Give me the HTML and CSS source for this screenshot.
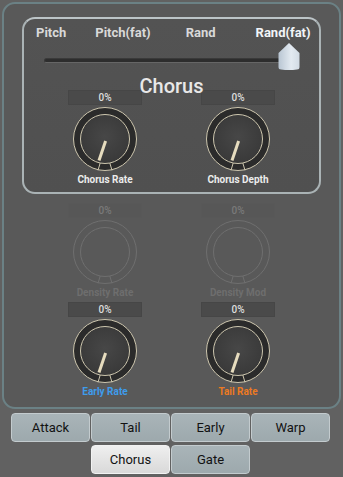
FILE: index.html
```html
<!DOCTYPE html>
<html>
<head>
<meta charset="utf-8">
<link rel="stylesheet" href="styles.css">
</head>
<body>
<div class="panel">
  <div class="chorus-box">
    <div class="modes">
      <span class="mode m1">Pitch</span>
      <span class="mode m2">Pitch(fat)</span>
      <span class="mode m3">Rand</span>
      <span class="mode m4 active">Rand(fat)</span>
    </div>
    <div class="slider">
      <div class="track"></div>
      <svg class="thumb" width="22" height="27" viewBox="0 0 22 27">
        <defs>
          <linearGradient id="tg" x1="0" y1="0" x2="1" y2="0">
            <stop offset="0" stop-color="#b9c6d3"/>
            <stop offset="0.6" stop-color="#e3eaf1"/>
            <stop offset="1" stop-color="#d2dbe4"/>
          </linearGradient>
          <radialGradient id="kg" cx="0.5" cy="0.45" r="0.6">
            <stop offset="0" stop-color="#474747"/>
            <stop offset="1" stop-color="#383838"/>
          </radialGradient>
        </defs>
        <path d="M11 0 L21.5 10 L21.5 24 Q21.5 26.5 19 26.5 Q11 27.5 3 26.5 Q0.5 26.5 0.5 24 L0.5 10 Z" fill="url(#tg)"/>
      </svg>
    </div>
    <div class="title">Chorus</div>
    <div class="knob-row">
      <div class="knob-unit">
        <div class="value">0%</div>
        <svg class="knob" width="66" height="66" viewBox="0 0 66 66">
          <circle cx="33" cy="33" r="31.5" fill="#2b2b2b" stroke="#cdc6ae" stroke-width="1"/>
          <circle cx="33" cy="33" r="24.5" fill="url(#kg)" stroke="#cdc6ae" stroke-width="1"/>
          <path d="M28.2 57 L26 64.3 M37.8 57 L40 64.3" stroke="#cdc6ae" stroke-width="1" fill="none"/>
          <path d="M33.6 35 L27 54.5" stroke="#e6dcbe" stroke-width="3"/>
        </svg>
        <div class="label">Chorus Rate</div>
      </div>
      <div class="knob-unit">
        <div class="value">0%</div>
        <svg class="knob" width="66" height="66" viewBox="0 0 66 66">
          <circle cx="33" cy="33" r="31.5" fill="#2b2b2b" stroke="#cdc6ae" stroke-width="1"/>
          <circle cx="33" cy="33" r="24.5" fill="url(#kg)" stroke="#cdc6ae" stroke-width="1"/>
          <path d="M28.2 57 L26 64.3 M37.8 57 L40 64.3" stroke="#cdc6ae" stroke-width="1" fill="none"/>
          <path d="M33.6 35 L27 54.5" stroke="#e6dcbe" stroke-width="3"/>
        </svg>
        <div class="label">Chorus Depth</div>
      </div>
    </div>
  </div>

  <div class="knob-row disabled row2">
    <div class="knob-unit">
      <div class="value">0%</div>
      <svg class="knob" width="66" height="66" viewBox="0 0 66 66">
        <circle cx="33" cy="33" r="31.5" fill="none" stroke="#6f6f6f" stroke-width="1"/>
        <circle cx="33" cy="33" r="24.5" fill="none" stroke="#6f6f6f" stroke-width="1"/>
        <path d="M28.2 57 L26 64.3 M37.8 57 L40 64.3" stroke="#6f6f6f" stroke-width="1" fill="none"/>
      </svg>
      <div class="label">Density Rate</div>
    </div>
    <div class="knob-unit">
      <div class="value">0%</div>
      <svg class="knob" width="66" height="66" viewBox="0 0 66 66">
        <circle cx="33" cy="33" r="31.5" fill="none" stroke="#6f6f6f" stroke-width="1"/>
        <circle cx="33" cy="33" r="24.5" fill="none" stroke="#6f6f6f" stroke-width="1"/>
        <path d="M28.2 57 L26 64.3 M37.8 57 L40 64.3" stroke="#6f6f6f" stroke-width="1" fill="none"/>
      </svg>
      <div class="label">Density Mod</div>
    </div>
  </div>

  <div class="knob-row row3">
    <div class="knob-unit">
      <div class="value">0%</div>
      <svg class="knob" width="66" height="66" viewBox="0 0 66 66">
        <circle cx="33" cy="33" r="31.5" fill="#2b2b2b" stroke="#cdc6ae" stroke-width="1"/>
        <circle cx="33" cy="33" r="24.5" fill="url(#kg)" stroke="#cdc6ae" stroke-width="1"/>
        <path d="M28.2 57 L26 64.3 M37.8 57 L40 64.3" stroke="#cdc6ae" stroke-width="1" fill="none"/>
        <path d="M33.6 35 L27 54.5" stroke="#e6dcbe" stroke-width="3"/>
      </svg>
      <div class="label blue">Early Rate</div>
    </div>
    <div class="knob-unit">
      <div class="value">0%</div>
      <svg class="knob" width="66" height="66" viewBox="0 0 66 66">
        <circle cx="33" cy="33" r="31.5" fill="#2b2b2b" stroke="#cdc6ae" stroke-width="1"/>
        <circle cx="33" cy="33" r="24.5" fill="url(#kg)" stroke="#cdc6ae" stroke-width="1"/>
        <path d="M28.2 57 L26 64.3 M37.8 57 L40 64.3" stroke="#cdc6ae" stroke-width="1" fill="none"/>
        <path d="M33.6 35 L27 54.5" stroke="#e6dcbe" stroke-width="3"/>
      </svg>
      <div class="label orange">Tail Rate</div>
    </div>
  </div>
</div>

<div class="tabs">
  <div class="tab">Attack</div>
  <div class="tab">Tail</div>
  <div class="tab">Early</div>
  <div class="tab">Warp</div>
  <div class="tab selected c2">Chorus</div>
  <div class="tab">Gate</div>
</div>
</body>
</html>
```

FILE: styles.css
```css
html, body {
  margin: 0;
  padding: 0;
}
body {
  width: 343px;
  height: 477px;
  overflow: hidden;
  background: #616161;
  font-family: Roboto, "Liberation Sans", sans-serif;
}
.panel {
  margin: 2px 2px 0 2px;
  height: 403px;
  border: 2px solid #6b8185;
  border-radius: 13px;
  background: #595959;
  box-sizing: content-box;
}
.chorus-box {
  margin: 13px 18px 0 18px;
  height: 173px;
  border: 2px solid #aab3b5;
  border-top-color: #bcc4c7;
  border-radius: 13px;
  background: linear-gradient(180deg, #535353, #505050);
}
.modes {
  display: flex;
  padding: 6px 0 0 12px;
  height: 15px;
  line-height: 15px;
  font-size: 13px;
  font-weight: 700;
  color: #d9d9d9;
}
.mode.m2 { margin-left: 29px; }
.mode.m3 { margin-left: 35px; }
.mode.m4 { margin-left: 40px; }
.mode.active { color: #f2f5f8; }
.slider {
  position: relative;
  margin: 0 21px 0 20px;
  padding-top: 18px;
  height: 9px;
}
.track {
  height: 3px;
  border: 1px solid #3a3a3a;
  border-bottom-color: #666;
  border-radius: 3px;
  background: #2d2d2d;
}
.thumb {
  position: absolute;
  right: -2px;
  top: 3px;
}
.title {
  text-align: center;
  font-size: 20px;
  font-weight: 500;
  line-height: 22px;
  height: 22px;
  color: #e8e8e8;
  margin-top: 8px;
  position: relative;
  z-index: 1;
}
.knob-row {
  display: grid;
  grid-template-columns: 133px 133px;
  justify-content: center;
}
.chorus-box .knob-row {
  margin-top: -7px;
}
.knob-unit {
  display: flex;
  flex-direction: column;
  align-items: center;
}
.value {
  width: 74px;
  height: 15px;
  box-sizing: border-box;
  background: #4a4a4a;
  border: 1px solid #464646;
  text-align: center;
  font-size: 10px;
  font-weight: 500;
  line-height: 13px;
  color: #dedede;
}
.knob {
  display: block;
  margin-top: 1px;
}
.label {
  margin-top: 1px;
  height: 14px;
  line-height: 14px;
  font-size: 10px;
  font-weight: 700;
  color: #ececec;
}
.label.blue { color: #3e9cec; }
.label.orange { color: #ec7a22; }
.row2 { margin-top: 9px; }
.row3 { margin-top: 2px; }
.disabled .value {
  background: #575757;
  border-color: #585858;
  color: #7a7a7a;
}
.disabled .label { color: #6e6e6e; }
.tabs {
  display: grid;
  grid-template-columns: repeat(4, 79px);
  grid-auto-rows: 29px;
  column-gap: 1px;
  row-gap: 3px;
  margin: 4px 0 0 11px;
}
.tab {
  box-sizing: border-box;
  border: 1px solid #c3cbce;
  border-radius: 4px;
  background: linear-gradient(180deg, #a9b4b8, #9da9ad);
  text-align: center;
  line-height: 27px;
  font-size: 13px;
  color: #121212;
}
.tab.c2 { grid-column: 2; }
.tab.selected {
  background: linear-gradient(180deg, #efefef, #d9d9d9);
  border-color: #f2f2f2;
}
```
